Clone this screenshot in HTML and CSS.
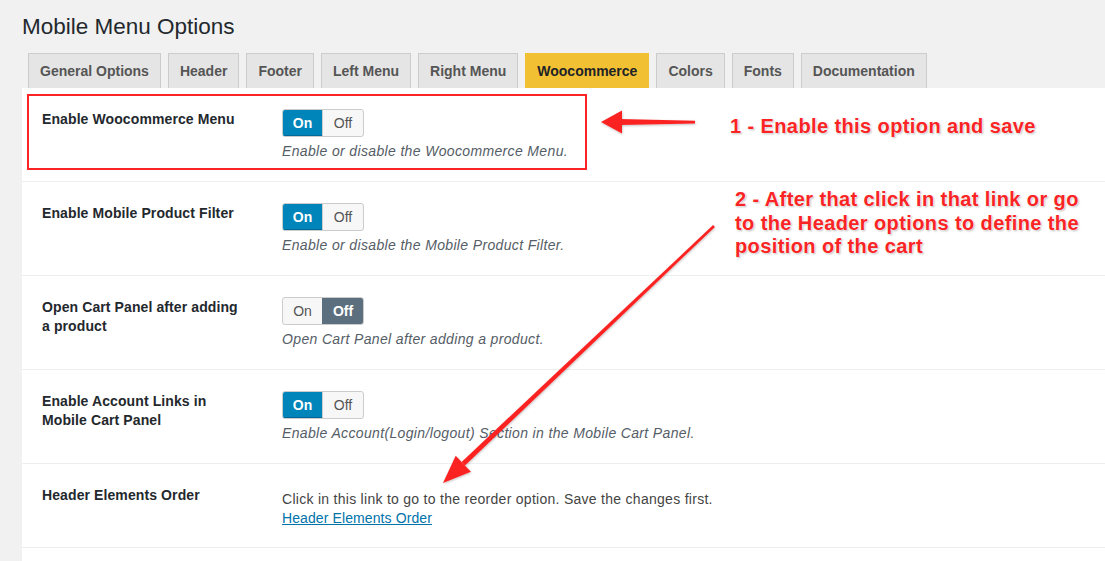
FILE: index.html
```html
<!DOCTYPE html>
<html lang="en">
<head>
<meta charset="utf-8">
<title>Mobile Menu Options</title>
<link rel="stylesheet" href="styles.css">
</head>
<body>
<div class="wrap">
  <h1 class="page-title">Mobile Menu Options</h1>
  <nav class="tabs">
    <a class="tab">General Options</a>
    <a class="tab">Header</a>
    <a class="tab">Footer</a>
    <a class="tab">Left Menu</a>
    <a class="tab">Right Menu</a>
    <a class="tab tab-active">Woocommerce</a>
    <a class="tab">Colors</a>
    <a class="tab">Fonts</a>
    <a class="tab">Documentation</a>
  </nav>
  <div class="panel">
    <div class="row">
      <div class="label">Enable Woocommerce Menu</div>
      <div class="field">
        <div class="toggle"><span class="opt opt-on active-on">On</span><span class="opt opt-off">Off</span></div>
        <p class="desc">Enable or disable the Woocommerce Menu.</p>
      </div>
    </div>
    <div class="row">
      <div class="label">Enable Mobile Product Filter</div>
      <div class="field">
        <div class="toggle"><span class="opt opt-on active-on">On</span><span class="opt opt-off">Off</span></div>
        <p class="desc">Enable or disable the Mobile Product Filter.</p>
      </div>
    </div>
    <div class="row">
      <div class="label">Open Cart Panel after adding a product</div>
      <div class="field">
        <div class="toggle"><span class="opt opt-on">On</span><span class="opt opt-off active-off">Off</span></div>
        <p class="desc">Open Cart Panel after adding a product.</p>
      </div>
    </div>
    <div class="row">
      <div class="label">Enable Account Links in Mobile Cart Panel</div>
      <div class="field">
        <div class="toggle"><span class="opt opt-on active-on">On</span><span class="opt opt-off">Off</span></div>
        <p class="desc">Enable Account(Login/logout) Section in the Mobile Cart Panel.</p>
      </div>
    </div>
    <div class="row">
      <div class="label">Header Elements Order</div>
      <div class="field field-text">
        <p class="plain">Click in this link to go to the reorder option. Save the changes first.</p>
        <a class="link" href="#">Header Elements Order</a>
      </div>
    </div>
  </div>
</div>

<div class="highlight-box"></div>

<svg class="arrows" width="1105" height="561" viewBox="0 0 1105 561" xmlns="http://www.w3.org/2000/svg">
  <defs>
    <filter id="sh" x="-20%" y="-20%" width="140%" height="140%">
      <feDropShadow dx="0.5" dy="1" stdDeviation="1" flood-color="#000" flood-opacity="0.25"/>
    </filter>
  </defs>
  <g fill="#fb2424" filter="url(#sh)">
    <polygon points="695,120.8 695,123.6 620,125 620,119"/>
    <polygon points="601,122 622,110.5 622,133.5"/>
    <polygon points="714.9,226.9 713.1,225.1 461.6,461.9 465.0,465.5"/>
    <polygon points="443,483 470.9,471.7 455.7,455.7"/>
  </g>
</svg>

<div class="note note-1">1 - Enable this option and save</div>
<div class="note note-2">2 - After that click in that link or go<br>to the Header options to define the<br>position of the cart</div>
</body>
</html>
```

FILE: styles.css
```css
html, body {
  margin: 0;
  padding: 0;
}

body {
  background: #f1f1f1;
  font-family: "Liberation Sans", Arial, sans-serif;
  color: #23282d;
  width: 1105px;
  height: 561px;
  overflow: hidden;
  position: relative;
}

.wrap {
  padding: 12px 0 0 22px;
}

.page-title {
  margin: 0;
  font-size: 22.5px;
  line-height: 29px;
  font-weight: 400;
  color: #23282d;
}

.tabs {
  display: flex;
  gap: 7px;
  margin: 12px 0 0 6px;
}

.tab {
  display: block;
  box-sizing: border-box;
  height: 35px;
  line-height: 34px;
  padding: 0 11px;
  border: 1px solid #cccccc;
  border-bottom: none;
  background: #e5e5e5;
  color: #555555;
  font-size: 14px;
  font-weight: 700;
  text-decoration: none;
}

.tab-active {
  background: #f2c033;
  border-color: #f2c033;
  color: #1d2327;
}

.panel {
  background: #ffffff;
  padding-bottom: 30px;
}

.row {
  display: flex;
  padding: 0 20px;
  border-bottom: 1px solid #eeeeee;
}

.label {
  box-sizing: border-box;
  width: 240px;
  padding: 22px 42px 0 0;
  font-size: 14px;
  line-height: 19px;
  font-weight: 700;
  color: #23282d;
  letter-spacing: 0.1px;
}

.field {
  padding: 21px 0 20px;
}

.field-text {
  padding: 26px 0 19px;
}

.toggle {
  display: inline-flex;
  box-sizing: border-box;
  height: 28px;
  border: 1px solid #cccccc;
  border-radius: 3px;
  overflow: hidden;
  background: #f7f7f7;
}

.opt {
  display: flex;
  align-items: center;
  justify-content: center;
  font-size: 14px;
  color: #555555;
}

.opt-on {
  width: 39px;
}

.opt-off {
  width: 40px;
  border-left: 1px solid #cccccc;
}

.active-on {
  background: #0085ba;
  color: #ffffff;
  font-weight: 700;
  box-shadow: inset 0 -1px 0 #006799;
}

.active-off {
  background: #5c6f7f;
  color: #ffffff;
  font-weight: 700;
  border-left-color: #5c6f7f;
}

.desc {
  margin: 5px 0 0;
  font-size: 14px;
  line-height: 19px;
  font-style: italic;
  color: #555d66;
  letter-spacing: 0.35px;
}

.plain {
  margin: 0;
  font-size: 14px;
  line-height: 19px;
  color: #444444;
  letter-spacing: 0.28px;
}

.link {
  display: block;
  font-size: 14px;
  line-height: 19px;
  color: #0073aa;
  text-decoration: underline;
  letter-spacing: 0.1px;
}

.highlight-box {
  position: absolute;
  left: 27px;
  top: 94px;
  width: 560px;
  height: 76px;
  box-sizing: border-box;
  border: 2px solid #fb2424;
}

.arrows {
  position: absolute;
  left: 0;
  top: 0;
  pointer-events: none;
}

.note {
  position: absolute;
  font-family: "Liberation Sans", Arial, sans-serif;
  font-weight: 700;
  font-size: 20px;
  line-height: 23.5px;
  letter-spacing: 0.4px;
  color: #fb2424;
  text-shadow: 0 0 2px #ffffff, 0 0 2px #ffffff, 1px 1px 2px rgba(0, 0, 0, 0.35);
  white-space: nowrap;
}

.note-1 {
  left: 730px;
  top: 115px;
}

.note-2 {
  left: 735px;
  top: 188px;
}
```
